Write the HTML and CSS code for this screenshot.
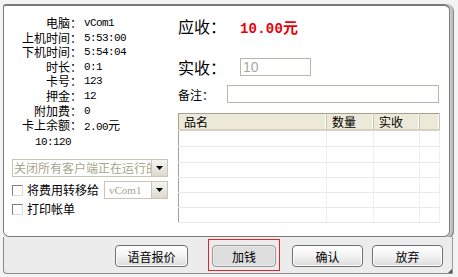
FILE: index.html
```html
<!DOCTYPE html>
<html lang="zh">
<head>
  <meta charset="UTF-8">
  <title>结账</title>
  <link rel="stylesheet" href="styles.css">
</head>
<body>

  <div class="window">
    <div class="panel">
      <div class="left">
        <div class="info">
          <span class="lbl">电脑：</span><span class="val">vCom1</span>
          <span class="lbl">上机时间：</span><span class="val">5:53:00</span>
          <span class="lbl">下机时间：</span><span class="val">5:54:04</span>
          <span class="lbl">时长：</span><span class="val">0:1</span>
          <span class="lbl">卡号：</span><span class="val">123</span>
          <span class="lbl">押金：</span><span class="val">12</span>
          <span class="lbl">附加费：</span><span class="val">0</span>
          <span class="lbl">卡上余额：</span><span class="val">2.00<span class="cjk">元</span></span>
        </div>
        <div class="extra">10:120</div>

        <div class="combo wide">
          <span class="combo-text">关闭所有客户端正在运行的程序</span>
          <span class="combo-btn"><svg width="7" height="4" viewBox="0 0 7 4"><path d="M0 0h7L3.5 4z" fill="#000"/></svg></span>
        </div>

        <div class="check-row">
          <span class="check"></span>
          <span class="check-text">将费用转移给</span>
          <div class="combo small">
            <span class="combo-text mono">vCom1</span>
            <span class="combo-btn"><svg width="7" height="4" viewBox="0 0 7 4"><path d="M0 0h7L3.5 4z" fill="#000"/></svg></span>
          </div>
        </div>
        <div class="check-row second">
          <span class="check"></span>
          <span class="check-text">打印帐单</span>
        </div>
      </div>

      <div class="right">
        <div class="due-row">
          <span class="big-lbl">应收：</span>
          <span class="due">10.00<span class="due-unit">元</span></span>
        </div>
        <div class="paid-row">
          <span class="big-lbl">实收：</span>
          <div class="field paid">10</div>
        </div>
        <div class="note-row">
          <span class="note-lbl">备注：</span>
          <div class="field note"></div>
        </div>

        <table class="goods">
          <thead>
            <tr><th class="c-name">品名</th><th class="c-qty">数量</th><th class="c-paid">实收</th><th class="c-rest"></th></tr>
          </thead>
          <tbody>
            <tr class="tall"><td></td><td></td><td></td><td></td></tr>
            <tr class="tall"><td></td><td></td><td></td><td></td></tr>
            <tr><td></td><td></td><td></td><td></td></tr>
            <tr><td></td><td></td><td></td><td></td></tr>
            <tr><td></td><td></td><td></td><td></td></tr>
            <tr><td></td><td></td><td></td><td></td></tr>
          </tbody>
        </table>
      </div>
    </div>

    <div class="footer">
      <button class="btn voice">语音报价</button>
      <div class="focus-ring">
        <button class="btn add">加钱</button>
      </div>
      <button class="btn ok">确认</button>
      <button class="btn cancel">放弃</button>
      <span class="grip"></span>
    </div>
  </div>

</body>
</html>
```

FILE: styles.css
```css
body {
  margin: 0;
  background: #f3f3f3;
  font-family: "Noto Sans CJK SC", sans-serif;
  font-size: 12px;
  color: #000;
}

.window {
  margin: 4px 0 0 3px;
  width: 450px;
  display: flex;
  flex-direction: column;
}

.panel {
  box-sizing: border-box;
  width: 447px;
  height: 233px;
  background: #fff;
  border: 1px solid #7a7a7a;
  border-top-width: 2px;
  border-radius: 3px 6px 6px 6px;
  box-shadow: 1px 0 0 #d0d0d0, 3px 0 0 #bdbdbd, 4px 1px 0 #8a8a8a;
  display: flex;
}

/* linker kolom */
.left {
  width: 166px;
  flex-shrink: 0;
}

.info {
  display: grid;
  grid-template-columns: 78px auto;
  column-gap: 2px;
  padding-top: 10px;
  line-height: 14.6px;
}

.lbl {
  text-align: right;
  white-space: nowrap;
}

.val {
  font-family: "Liberation Mono", monospace;
  font-size: 11px;
  letter-spacing: -0.6px;
}

.cjk {
  font-family: "Noto Sans CJK SC", sans-serif;
  font-size: 12px;
  letter-spacing: 0;
}

.extra {
  padding-left: 31px;
  line-height: 14.6px;
  font-family: "Liberation Mono", monospace;
  font-size: 11px;
  letter-spacing: -0.6px;
}

.combo {
  box-sizing: border-box;
  height: 18px;
  border: 1px solid #c9c6b5;
  background: #fff;
  display: flex;
  align-items: stretch;
  overflow: hidden;
  flex-shrink: 0;
}

.combo.wide {
  width: 156px;
  margin: 10px 0 0 8px;
}

.combo.small {
  width: 64px;
  margin-left: 5px;
}

.combo-text {
  flex: 1;
  color: #a8a48e;
  white-space: nowrap;
  overflow: hidden;
  padding-left: 1px;
  line-height: 16px;
}

.combo-text.mono {
  font-family: "Liberation Serif", serif;
  font-size: 11px;
  padding-left: 4px;
}

.combo-btn {
  width: 15px;
  flex-shrink: 0;
  background: linear-gradient(#f4f4f0, #dcdad0);
  border-left: 1px solid #c9c6b5;
  display: flex;
  align-items: center;
  justify-content: center;
}

.check-row {
  display: flex;
  align-items: center;
  height: 18px;
  margin-top: 4px;
  padding-left: 8px;
}

.check-row.second {
  margin-top: 1px;
}

.check {
  box-sizing: border-box;
  width: 11px;
  height: 11px;
  border: 1px solid;
  border-color: #7e7e7e #dcdcdc #dcdcdc #7e7e7e;
  background: #fff;
  flex-shrink: 0;
}

.check-text {
  margin-left: 4px;
  font-size: 12px;
  white-space: nowrap;
  line-height: 16px;
}

/* rechter kolom */
.right {
  flex: 1;
  padding-left: 8px;
}

.due-row {
  display: flex;
  align-items: center;
  height: 20px;
  margin-top: 10px;
}

.big-lbl {
  width: 62px;
  font-size: 16px;
  flex-shrink: 0;
}

.due {
  color: #e8000b;
  font-family: "Liberation Mono", monospace;
  font-weight: bold;
  font-size: 14px;
  letter-spacing: 0.2px;
}

.due-unit {
  font-family: "Noto Sans CJK SC", sans-serif;
  font-size: 15px;
  letter-spacing: 0;
}

.paid-row {
  display: flex;
  align-items: center;
  height: 18px;
  margin-top: 22px;
}

.field {
  box-sizing: border-box;
  height: 18px;
  border: 1px solid #b9b7aa;
  background: #fff;
}

.field.paid {
  width: 71px;
  color: #a8a8a8;
  font-family: "Liberation Sans", sans-serif;
  font-size: 14px;
  line-height: 16px;
  padding-left: 2px;
}

.note-row {
  display: flex;
  align-items: center;
  height: 18px;
  margin-top: 9px;
}

.note-lbl {
  width: 49px;
  flex-shrink: 0;
}

.field.note {
  width: 212px;
}

.goods {
  margin-top: 10px;
  width: 262px;
  border-collapse: collapse;
  border: 1px solid #a3a395;
  table-layout: fixed;
}

.goods th {
  height: 15px;
  padding: 0 0 0 5px;
  background: #ece9d8;
  font-weight: normal;
  text-align: left;
  line-height: 15px;
  border-bottom: 2px solid #d6d2c2;
  border-right: 1px solid #c7c5b2;
  box-shadow: inset -1px 0 0 #fff;
}

.goods .c-name { width: 142px; }
.goods .c-qty { width: 41px; }
.goods .c-paid { width: 40px; }

.goods td {
  height: 14px;
  padding: 0;
  border-right: 1px solid #efefef;
  border-bottom: 1px solid #e9e9e9;
}

.goods tr.tall td {
  height: 15px;
}

/* knoppen onderaan */
.footer {
  position: relative;
  box-sizing: border-box;
  width: 450px;
  height: 37px;
  background: #ececec;
  border-left: 1px solid #8a8a8a;
  border-bottom: 1px solid #8a8a8a;
  border-right: 1px solid #9a9a9a;
  border-bottom-left-radius: 4px;
  display: flex;
  align-items: flex-start;
  justify-content: flex-end;
  padding: 8px 9px 0 0;
}

.btn {
  box-sizing: border-box;
  height: 22px;
  width: 71px;
  padding: 0;
  font-family: "Noto Sans CJK SC", sans-serif;
  font-size: 12px;
  color: #000;
  border: 1px solid #6e6e6e;
  border-radius: 4px;
  background: linear-gradient(#ffffff, #f4f4f4 45%, #dcdcdc);
  box-shadow: inset 0 0 0 1px #fff;
}

.btn.voice {
  width: 73px;
}

.btn.ok {
  margin-left: 12px;
}

.btn.cancel {
  margin-left: 9px;
}

.focus-ring {
  margin: -6px 0 0 20px;
  padding: 5px 3px 3px;
  border: 1px solid #e2252b;
}

.btn.add {
  width: 64px;
  border-color: #9a9a9a;
  background: #dedede;
  box-shadow: inset 0 0 0 1px #ececec;
}

.grip {
  position: absolute;
  right: 0;
  bottom: 0;
  width: 0;
  height: 0;
  border-left: 4px solid transparent;
  border-bottom: 4px solid #555;
}
```
